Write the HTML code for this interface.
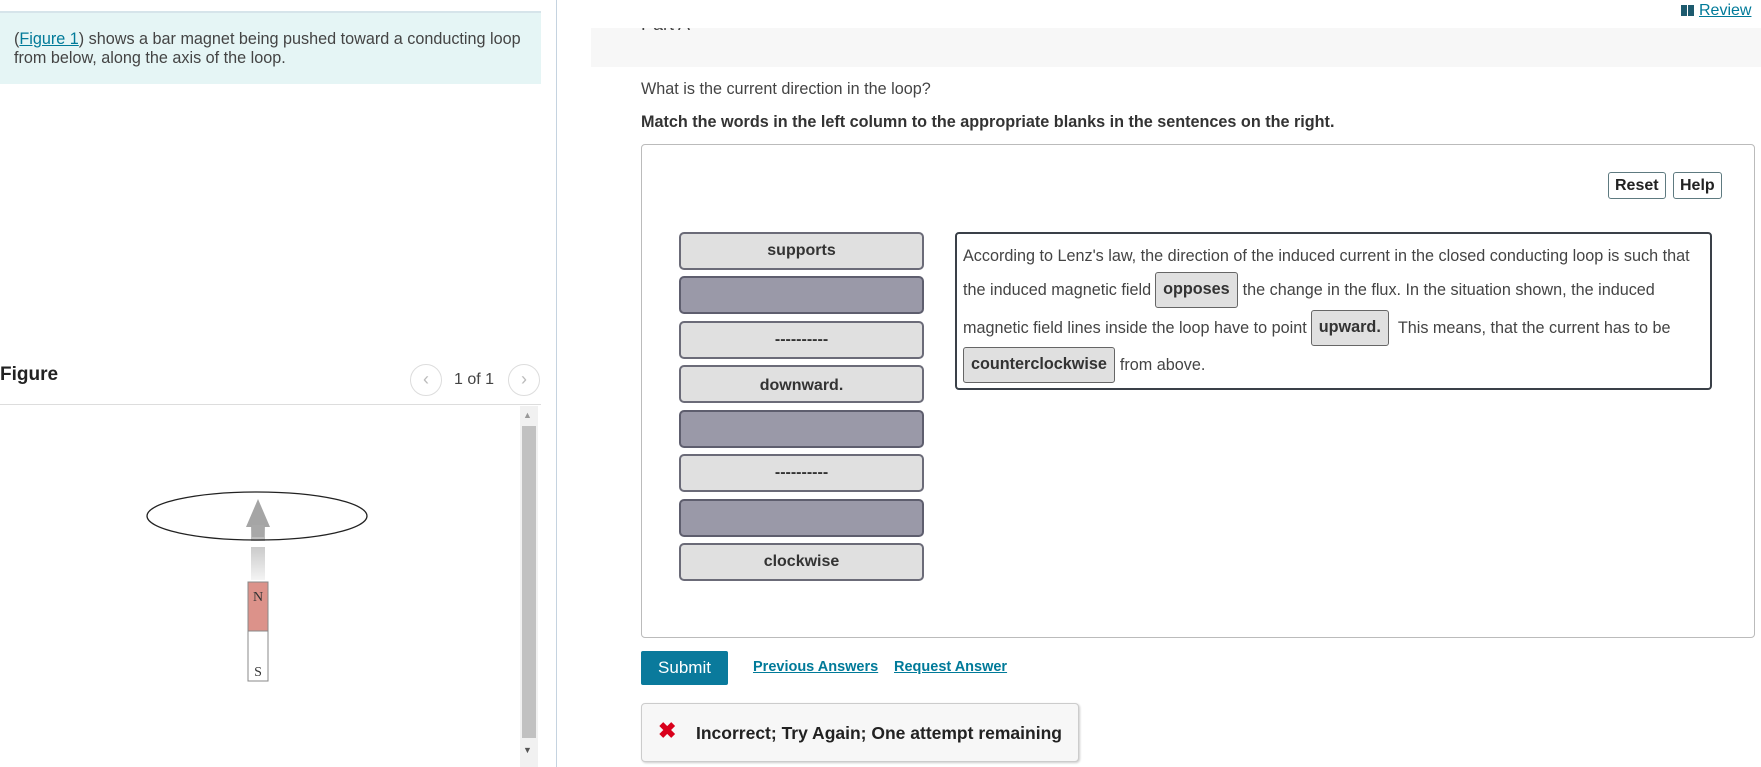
<!DOCTYPE html>
<html><head><meta charset="utf-8"><style>
*{box-sizing:border-box;margin:0;padding:0}
body{width:1761px;height:767px;overflow:hidden;background:#fff;font-family:"Liberation Sans",Arial,sans-serif;color:#333;position:relative}
.abs{position:absolute}
.teal{left:0;top:11px;width:541px;height:73px;background:#e5f5f5;border-top:2px solid #d6e4ea;font-size:16.2px;line-height:19px;padding:17px 0 0 14px;color:#444}
a{color:#007a99;text-decoration:underline}
.item{position:absolute;left:679px;width:245px;height:38px;border:2px solid #6b6b78;border-radius:5px;background:#e0e0e0;font-weight:bold;font-size:16px;text-align:center;line-height:34px;color:#333}
.item.dk{background:#9a99a8;border-color:#5e5e6e}
.line{position:absolute;left:963px;height:36px;display:flex;align-items:center;font-size:16.2px;color:#444;white-space:nowrap}
.chip{display:inline-block;height:36px;line-height:33px;border:1.5px solid #666;border-radius:3px;background:#e0e0e0;font-weight:bold;color:#333;padding:0 7px;margin:0 5px 0 4px}
.btn{position:absolute;top:172px;height:27px;border:1px solid #5e7a80;border-radius:3px;font-weight:bold;font-size:16px;line-height:25px;padding:0 6px;color:#222;background:#fff}
</style></head><body>
<div class="abs teal">(<a>Figure 1</a>) shows a bar magnet being pushed toward a conducting loop<br>from below, along the axis of the loop.</div>
<div class="abs" style="left:556px;top:0;width:1px;height:767px;background:#c5d3e0"></div>
<div class="abs" style="left:0;top:364px;font-weight:bold;font-size:19px;color:#222">Figure</div>
<div class="abs" style="left:410px;top:364px;width:32px;height:32px;border:1px solid #ddd;border-radius:50%;color:#bbb;text-align:center;line-height:29px;font-size:18px">&#x2039;</div>
<div class="abs" style="left:454px;top:371px;font-size:16px;color:#444">1 of 1</div>
<div class="abs" style="left:508px;top:364px;width:32px;height:32px;border:1px solid #ddd;border-radius:50%;color:#bbb;text-align:center;line-height:29px;font-size:18px">&#x203A;</div>
<div class="abs" style="left:0;top:404px;width:541px;height:1px;background:#ddd"></div>
<div class="abs" style="left:520px;top:406px;width:18px;height:361px;background:#f1f1f1"></div>
<div class="abs" style="left:522px;top:426px;width:14px;height:312px;background:#c1c1c1"></div>
<div class="abs" style="left:523px;top:410px;font-size:9px;color:#999">▲</div>
<div class="abs" style="left:523px;top:745px;font-size:9px;color:#555">▼</div>
<svg class="abs" style="left:0;top:405px" width="520" height="362">
<defs><linearGradient id="g" x1="0" y1="1" x2="0" y2="0"><stop offset="0" stop-color="#f4f4f4"/><stop offset="1" stop-color="#a8a8a8"/></linearGradient></defs>
<rect x="251" y="115" width="14" height="60" fill="url(#g)"/>
<polygon points="258,94 246,122 270,122" fill="#a5a5a5"/>
<rect x="252" y="120" width="12" height="12" fill="#a8a8a8"/>
<ellipse cx="257" cy="111" rx="110" ry="24" fill="none" stroke="#222" stroke-width="1.3"/>
<rect x="249" y="136" width="18" height="6" fill="#fff"/>
<rect x="248" y="177" width="20" height="49" fill="#dc928a" stroke="#888"/>
<rect x="248" y="226" width="20" height="50" fill="#fff" stroke="#888"/>
<text x="258" y="196" font-family="Liberation Serif" font-size="14" text-anchor="middle" fill="#333">N</text>
<text x="258" y="271" font-family="Liberation Serif" font-size="14" text-anchor="middle" fill="#333">S</text>
</svg>
<div class="abs" style="left:1681px;top:5px;width:6px;height:11px;background:#1d5a6e"></div>
<div class="abs" style="left:1688px;top:5px;width:6px;height:11px;background:#1d5a6e"></div>
<div class="abs" style="left:1699px;top:2px;font-size:16px"><a> Review</a></div>
<div class="abs" style="left:591px;top:28px;width:1170px;height:39px;background:#f7f7f7;overflow:hidden"><div style="position:absolute;left:50px;top:-14px;font-size:18px;color:#444">Part A</div></div>
<div class="abs" style="left:641px;top:80px;font-size:16.2px;color:#444">What is the current direction in the loop?</div>
<div class="abs" style="left:641px;top:113px;font-size:16.2px;font-weight:bold;color:#333">Match the words in the left column to the appropriate blanks in the sentences on the right.</div>
<div class="abs" style="left:641px;top:144px;width:1114px;height:494px;border:1px solid #bbb;border-radius:4px"></div>
<div class="btn" style="left:1608px">Reset</div>
<div class="btn" style="left:1673px">Help</div>
<div class="item" style="top:232px">supports</div>
<div class="item dk" style="top:276px"></div>
<div class="item" style="top:321px">----------</div>
<div class="item" style="top:365px;line-height:38px">downward.</div>
<div class="item dk" style="top:410px"></div>
<div class="item" style="top:454px">----------</div>
<div class="item dk" style="top:499px"></div>
<div class="item" style="top:543px">clockwise</div>
<div class="abs" style="left:955px;top:232px;width:757px;height:158px;border:2px solid #3a4048;border-radius:4px"></div>
<div class="line" style="top:238px">According to Lenz's law, the direction of the induced current in the closed conducting loop is such that</div>
<div class="line" style="top:272px">the induced magnetic field<span class="chip">opposes</span>the change in the flux. In the situation shown, the induced</div>
<div class="line" style="top:310px">magnetic field lines inside the loop have to point<span class="chip" style="margin-right:9px">upward.</span>This means, that the current has to be</div>
<div class="line" style="top:347px"><span class="chip" style="margin-left:0">counterclockwise</span>from above.</div>
<div class="abs" style="left:641px;top:651px;width:87px;height:34px;background:#0a7a9c;border-radius:2px;color:#fff;font-size:17px;text-align:center;line-height:34px">Submit</div>
<div class="abs" style="left:753px;top:659px;font-size:14.5px;font-weight:bold"><a>Previous Answers</a></div>
<div class="abs" style="left:894px;top:659px;font-size:14.5px;font-weight:bold"><a>Request Answer</a></div>
<div class="abs" style="left:641px;top:703px;width:438px;height:59px;background:#f7f7f7;border:1px solid #ccc;border-radius:4px;box-shadow:1px 1px 2px #ccc"></div>
<div class="abs" style="left:658px;top:718px;font-size:22px;font-weight:bold;color:#d9001b">✖</div>
<div class="abs" style="left:696px;top:723px;font-size:17.5px;font-weight:bold;color:#222">Incorrect; Try Again; One attempt remaining</div>
</body></html>
